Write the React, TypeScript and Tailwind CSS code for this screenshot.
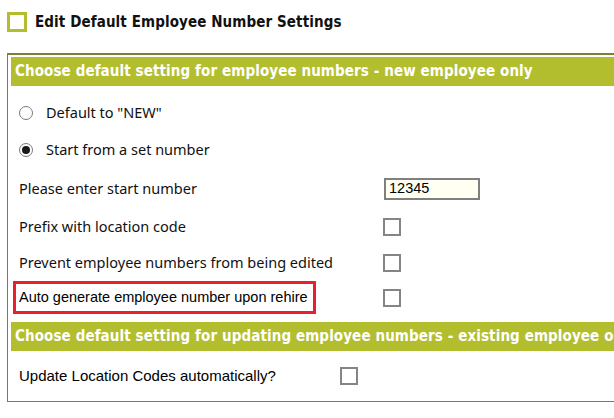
const HEAD_FONT = "font-['DejaVu_Sans_Condensed','DejaVu_Sans',sans-serif] [font-stretch:condensed]";
const LABEL_FONT = "font-['Noto_Sans',sans-serif]";
const ARIAL = "font-['Liberation_Sans',Arial,sans-serif]";

function Radio({ checked }: { checked?: boolean }) {
  return (
    <span className="flex h-[14px] w-[14px] items-center justify-center rounded-full border border-[#7a7a7a] bg-white">
      {checked && <span className="h-[8px] w-[8px] rounded-full bg-[#1a1a1a]" />}
    </span>
  );
}

function Box() {
  return <span className="block h-[18px] w-[18px] border-2 border-[#858585] bg-white" />;
}

function SectionHeader({ children }: { children: string }) {
  return (
    <div
      className={`flex h-[29px] items-center whitespace-nowrap bg-[#b3be2f] pl-[4px] text-[15px] font-bold tracking-[0.1px] text-white ${HEAD_FONT}`}
    >
      {children}
    </div>
  );
}

function CheckRow({ label, height }: { label: string; height: string }) {
  return (
    <div className={`flex items-center ${height}`}>
      <span className={`w-[375px] pl-[11px] text-[14.5px] text-[#111] ${LABEL_FONT}`}>{label}</span>
      <Box />
    </div>
  );
}

export default function App() {
  return (
    <div className="h-[418px] w-[614px] overflow-hidden bg-white">
      {/* title */}
      <div className="flex h-[44px] items-center gap-[8px] pl-[7px]">
        <span className="block h-[20px] w-[20px] border-[3px] border-[#b3be2f] bg-white" />
        <span className={`text-[15px] font-bold tracking-[0.1px] text-[#111] ${HEAD_FONT}`}>
          Edit Default Employee Number Settings
        </span>
      </div>

      <div className="ml-[7px] mt-[9px] w-[660px] border-b border-l border-t-2 border-[#7b8036] pl-[3px] pt-[2px]">
        <SectionHeader>Choose default setting for employee numbers - new employee only</SectionHeader>

        <div className="h-[8px]" />
        <div className="flex h-[37px] items-center gap-[13px] pl-[8px]">
          <Radio />
          <span className={`text-[14.5px] text-[#111] ${LABEL_FONT}`}>Default to "NEW"</span>
        </div>
        <div className="flex h-[37px] items-center gap-[13px] pl-[8px]">
          <Radio checked />
          <span className={`text-[14.5px] text-[#111] ${LABEL_FONT}`}>Start from a set number</span>
        </div>

        <div className="flex h-[40px] items-center pt-[2px]">
          <span className={`w-[373px] pl-[8px] text-[14.5px] text-[#111] ${LABEL_FONT}`}>Please enter start number</span>
          <div
            className={`flex h-[22px] w-[96px] items-center border-2 border-[#7f7f7f] bg-[#fffff2] pl-[3px] text-[14.5px] text-black ${ARIAL}`}
          >
            12345
          </div>
        </div>

        <div className="-ml-[3px]">
          <CheckRow label="Prefix with location code" height="h-[37px]" />
          <CheckRow label="Prevent employee numbers from being edited" height="h-[36px]" />
          <div className="flex h-[33px] items-center pl-[5px]">
            <span
              className={`flex h-full w-[303px] items-center border-[3px] border-[#e8202b] pl-[3px] text-[14.5px] text-black ${ARIAL}`}
            >
              Auto generate employee number upon rehire
            </span>
            <span className="ml-[67px]">
              <Box />
            </span>
          </div>
        </div>

        <div className="h-[8px]" />
        <SectionHeader>Choose default setting for updating employee numbers - existing employee only</SectionHeader>
        <div className="-ml-[3px] flex h-[50px] items-center">
          <span className={`w-[332px] pl-[11px] text-[15px] text-black ${ARIAL}`}>Update Location Codes automatically?</span>
          <Box />
        </div>
      </div>
    </div>
  );
}
